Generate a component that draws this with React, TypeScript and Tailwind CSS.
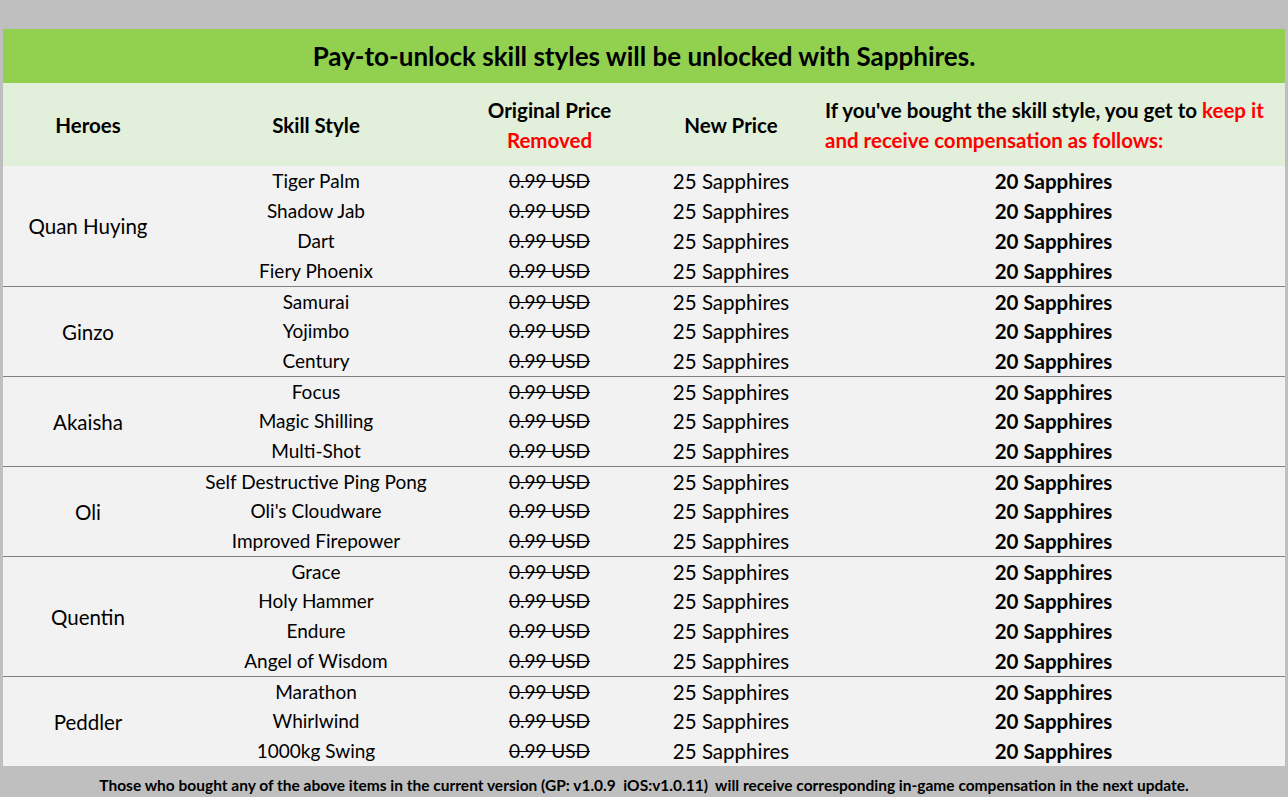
const groups: { hero: string; skills: string[] }[] = [
  { hero: "Quan Huying", skills: ["Tiger Palm", "Shadow Jab", "Dart", "Fiery Phoenix"] },
  { hero: "Ginzo", skills: ["Samurai", "Yojimbo", "Century"] },
  { hero: "Akaisha", skills: ["Focus", "Magic Shilling", "Multi-Shot"] },
  { hero: "Oli", skills: ["Self Destructive Ping Pong", "Oli's Cloudware", "Improved Firepower"] },
  { hero: "Quentin", skills: ["Grace", "Holy Hammer", "Endure", "Angel of Wisdom"] },
  { hero: "Peddler", skills: ["Marathon", "Whirlwind", "1000kg Swing"] },
];

const cols = "grid grid-cols-[170px_286px_181px_182px_1fr]";

export default function App() {
  return (
    <div
      className="w-[1288px] h-[797px] bg-[#bfbfbf] pt-[29px] px-[3px] text-black overflow-hidden"
      style={{ fontFamily: "Lato, 'Open Sans', sans-serif" }}
    >
      <div className="w-[1282px]">
        <div className="h-[54px] bg-[#92d050] flex items-center justify-center text-[26px] font-bold">
          Pay-to-unlock skill styles will be unlocked with Sapphires.
        </div>
        <div className={`${cols} h-[83px] bg-[#e2efda] text-[20.5px] font-bold leading-[30px]`}>
          <div className="flex items-center justify-center">Heroes</div>
          <div className="flex items-center justify-center">Skill Style</div>
          <div className="flex flex-col items-center justify-center">
            <span>Original Price</span>
            <span className="text-[#ff0000]">Removed</span>
          </div>
          <div className="flex items-center justify-center">New Price</div>
          <div className="flex flex-col justify-center pl-[3px]">
            <span>
              If you've bought the skill style, you get to <span className="text-[#ff0000]">keep it</span>
            </span>
            <span className="text-[#ff0000]">and receive compensation as follows:</span>
          </div>
        </div>
        <div className="bg-[#f2f2f2] leading-[30px]">
          {groups.map((g, gi) => (
            <div
              key={g.hero}
              className={`${cols} text-[20.5px] ${gi > 0 ? "border-t border-[#808080]" : ""}`}
              style={{
                gridTemplateRows: `${gi > 0 ? 29 : 30}px repeat(${g.skills.length - 1}, 30px)`,
              }}
            >
              <div
                className="col-start-1 flex items-center justify-center"
                style={{ gridRow: `1 / span ${g.skills.length}` }}
              >
                {g.hero}
              </div>
              {g.skills.map((s, i) => (
                <div key={s} className="contents">
                  <div className="col-start-2 flex items-center justify-center text-[19px]" style={{ gridRow: i + 1 }}>
                    {s}
                  </div>
                  <div
                    className="col-start-3 flex items-center justify-center text-[19px] line-through"
                    style={{ gridRow: i + 1 }}
                  >
                    0.99 USD
                  </div>
                  <div className="col-start-4 flex items-center justify-center" style={{ gridRow: i + 1 }}>
                    25 Sapphires
                  </div>
                  <div className="col-start-5 flex items-center justify-center font-bold" style={{ gridRow: i + 1 }}>
                    20 Sapphires
                  </div>
                </div>
              ))}
            </div>
          ))}
        </div>
      </div>
      <div className="h-[30px] pt-[9px] flex items-center justify-center text-[15.5px] font-bold whitespace-pre">
        {"Those who bought any of the above items in the current version (GP: v1.0.9  iOS:v1.0.11)  will receive corresponding in-game compensation in the next update."}
      </div>
    </div>
  );
}
